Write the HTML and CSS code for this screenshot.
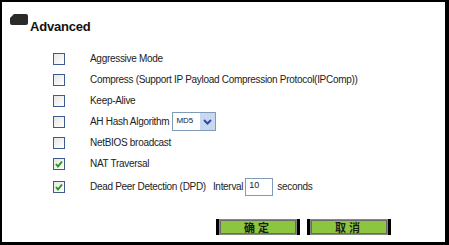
FILE: index.html
```html
<!DOCTYPE html>
<html>
<head>
<meta charset="utf-8">
<link rel="stylesheet" href="styles.css">
</head>
<body>
<div class="frame">
  <div class="title">
    <svg class="title-icon" width="18" height="11" viewBox="0 0 18 11"><path d="M4 0 H16 Q18 0 18 2 V9 Q18 11 16 11 H2 Q0 11 0 9 V4 Z" fill="#2a2a2a"/></svg>
    <span class="title-text">Advanced</span>
  </div>
  <div class="rows">
    <div class="row"><span class="cb"></span><span class="label">Aggressive Mode</span></div>
    <div class="row"><span class="cb"></span><span class="label">Compress (Support IP Payload Compression Protocol(IPComp))</span></div>
    <div class="row"><span class="cb"></span><span class="label">Keep-Alive</span></div>
    <div class="row"><span class="cb"></span><span class="label">AH Hash Algorithm</span>
      <span class="select"><span class="select-val">MD5</span><span class="select-btn"><svg width="9" height="6" viewBox="0 0 9 6"><path d="M1 1 L4.5 4.5 L8 1" fill="none" stroke="#2a4ea8" stroke-width="2"/></svg></span></span>
    </div>
    <div class="row"><span class="cb"></span><span class="label">NetBIOS broadcast</span></div>
    <div class="row"><span class="cb checked"><svg width="10" height="10" viewBox="0 0 10 10"><path d="M2 5 L4 7.5 L8 2.5" fill="none" stroke="#1f9a1f" stroke-width="2"/></svg></span><span class="label">NAT Traversal</span></div>
    <div class="row last"><span class="cb checked"><svg width="10" height="10" viewBox="0 0 10 10"><path d="M2 5 L4 7.5 L8 2.5" fill="none" stroke="#1f9a1f" stroke-width="2"/></svg></span><span class="label">Dead Peer Detection (DPD)</span>
      <span class="label gap">Interval</span><span class="input">10</span><span class="label">seconds</span>
    </div>
  </div>
  <div class="buttons">
    <span class="btn"><span class="btn-in">确定</span></span>
    <span class="btn"><span class="btn-in">取消</span></span>
  </div>
</div>
</body>
</html>
```
FILE: styles.css
```css
html, body { margin: 0; padding: 0; background: #fff; }
.frame {
  width: 443px;
  height: 240px;
  border-style: solid;
  border-color: #000;
  border-width: 2px 4px 3px 2px;
  background: #fff;
  font-family: "Liberation Sans", Arial, sans-serif;
  color: #222;
  display: flex;
  flex-direction: column;
}
.title {
  display: flex;
  align-items: flex-start;
  padding: 12px 0 0 8px;
  height: 18px;
}
.title-icon { margin-top: 0; flex: none; }
.title-text {
  font-weight: bold;
  font-size: 13px;
  line-height: 15px;
  margin-top: 5px;
  margin-left: 2px;
  color: #111;
  letter-spacing: -0.2px;
}
.rows {
  display: flex;
  flex-direction: column;
  padding: 16px 0 0 51px;
}
.row {
  display: flex;
  align-items: center;
  height: 21px;
}
.row.last { height: 25px; }
.cb {
  width: 10px;
  height: 10px;
  border: 1px solid #3f5a8f;
  background: linear-gradient(135deg, #e6e6e2, #fff);
  display: flex;
  align-items: center;
  justify-content: center;
  margin-right: 25px;
  flex: none;
}
.cb.checked svg { display: block; }
.label { font-size: 10px; color: #222; white-space: nowrap; letter-spacing: -0.3px; }
.label.gap { margin-left: 7px; }
.select {
  display: flex;
  margin-left: 3px;
  width: 42px;
  height: 17px;
  border: 1px solid #7f9db9;
  background: #fff;
}
.select-val { font-size: 8px; padding: 3px 0 0 3px; flex: 1; }
.select-btn {
  width: 15px;
  background: #c9d7f2;
  display: flex;
  align-items: center;
  justify-content: center;
}
.input {
  width: 23px;
  height: 15px;
  border: 1px solid #7f9db9;
  margin: 0 4px 0 2px;
  font-size: 9px;
  padding: 1px 0 0 3px;
  box-sizing: content-box;
}
.buttons {
  display: flex;
  padding: 20px 0 0 214px;
  gap: 7px;
}
.btn {
  width: 76px;
  height: 14px;
  border-left: 3px solid #000;
  border-right: 3px solid #000;
  padding: 1px;
  background: #888;
  display: flex;
}
.btn-in {
  flex: 1;
  background: #8cc63e;
  border: 1px solid #6a6a6a;
  font-size: 11px;
  font-weight: bold;
  color: #1a1a1a;
  font-family: "Noto Sans CJK SC", sans-serif;
  display: flex;
  align-items: center;
  justify-content: center;
  letter-spacing: 3px;
  line-height: 1;
}
```
